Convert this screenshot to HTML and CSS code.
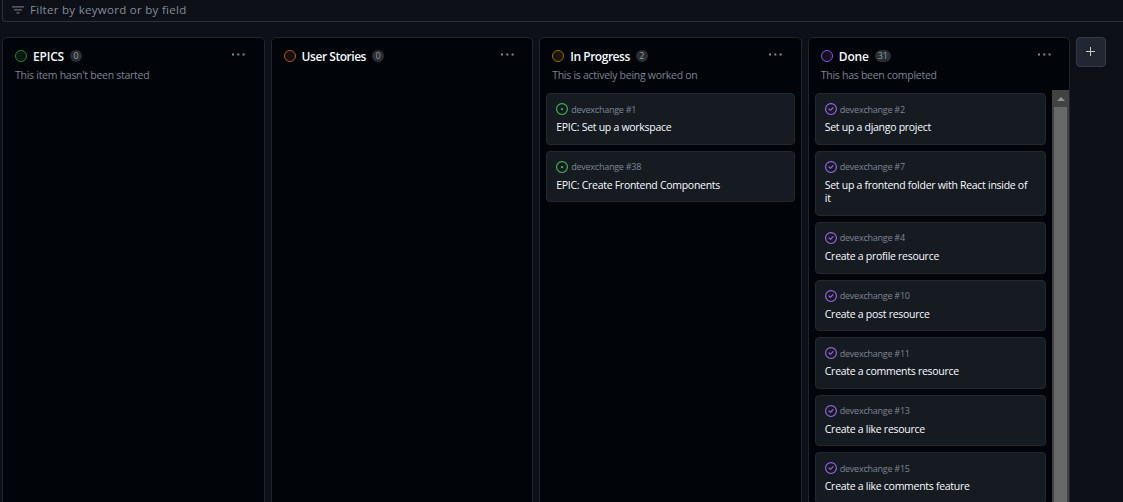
FILE: index.html
```
<!DOCTYPE html>
<html lang="en">
<head>
<meta charset="utf-8">
<title>devexchange board</title>
<link rel="stylesheet" href="styles.css">
</head>
<body>
<svg class="defs" aria-hidden="true">
  <symbol id="open" viewBox="0 0 16 16"><path d="M8 9.5a1.5 1.5 0 1 0 0-3 1.5 1.5 0 0 0 0 3Z"/><path d="M8 0a8 8 0 1 1 0 16A8 8 0 0 1 8 0ZM1.5 8a6.5 6.5 0 1 0 13 0 6.5 6.5 0 0 0-13 0Z"/></symbol>
  <symbol id="closed" viewBox="0 0 16 16"><path d="M11.28 6.78a.75.75 0 0 0-1.06-1.06L7.25 8.69 5.78 7.22a.75.75 0 0 0-1.06 1.06l2 2a.75.75 0 0 0 1.06 0l3.5-3.5Z"/><path d="M16 8A8 8 0 1 1 0 8a8 8 0 0 1 16 0Zm-1.5 0a6.5 6.5 0 1 0-13 0 6.5 6.5 0 0 0 13 0Z"/></symbol>
  <symbol id="dots" viewBox="0 0 13 3"><path d="M0 .5h2v2H0zM5.3.5h2v2h-2zM10.6.5h2v2h-2z"/></symbol>
</svg>
<div class="filter">
  <svg class="filter-icon" viewBox="0 0 12 8"><path d="M0 .3h12v1.3H0zM2 3.3h8v1.3H2zM4.5 6.3h3v1.3h-3z"/></svg>
  <span class="filter-text">Filter by keyword or by field</span>
</div>
<main class="board">
  <section class="column">
    <header class="head"><i class="dot green"></i><h2>EPICS</h2><span class="count">0</span><svg class="more"><use href="#dots"/></svg></header>
    <p class="desc">This item hasn't been started</p>
  </section>
  <section class="column">
    <header class="head"><i class="dot orange"></i><h2 class="tight">User Stories</h2><span class="count">0</span><svg class="more"><use href="#dots"/></svg></header>
  </section>
  <section class="column">
    <header class="head"><i class="dot yellow"></i><h2 class="tight">In Progress</h2><span class="count">2</span><svg class="more"><use href="#dots"/></svg></header>
    <p class="desc">This is actively being worked on</p>
    <div class="cards">
      <article class="card"><div class="repo"><svg class="open"><use href="#open"/></svg>devexchange #1</div><h3>EPIC: Set up a workspace</h3></article>
      <article class="card"><div class="repo"><svg class="open"><use href="#open"/></svg>devexchange #38</div><h3>EPIC: Create Frontend Components</h3></article>
    </div>
  </section>
  <section class="column done">
    <header class="head"><i class="dot purple"></i><h2>Done</h2><span class="count">31</span><svg class="more"><use href="#dots"/></svg></header>
    <p class="desc">This has been completed</p>
    <div class="scroller">
      <div class="cards">
        <article class="card"><div class="repo"><svg class="closed"><use href="#closed"/></svg>devexchange #2</div><h3>Set up a django project</h3></article>
        <article class="card tall"><div class="repo"><svg class="closed"><use href="#closed"/></svg>devexchange #7</div><h3>Set up a frontend folder with React inside of<br>it</h3></article>
        <article class="card"><div class="repo"><svg class="closed"><use href="#closed"/></svg>devexchange #4</div><h3>Create a profile resource</h3></article>
        <article class="card"><div class="repo"><svg class="closed"><use href="#closed"/></svg>devexchange #10</div><h3>Create a post resource</h3></article>
        <article class="card"><div class="repo"><svg class="closed"><use href="#closed"/></svg>devexchange #11</div><h3>Create a comments resource</h3></article>
        <article class="card"><div class="repo"><svg class="closed"><use href="#closed"/></svg>devexchange #13</div><h3>Create a like resource</h3></article>
        <article class="card"><div class="repo"><svg class="closed"><use href="#closed"/></svg>devexchange #15</div><h3>Create a like comments feature</h3></article>
      </div>
      <div class="bar"><svg class="arrow" viewBox="0 0 8 4"><path d="M0 4 4 0l4 4z"/></svg><div class="thumb"></div></div>
    </div>
  </section>
  <button class="add" aria-label="Add column"><svg viewBox="0 0 9 9"><path d="M4 0h1v4h4v1H5v4H4V5H0V4h4z"/></svg></button>
</main>
</body>
</html>
```
FILE: styles.css
```
* { box-sizing: border-box; }
body {
  margin: 0;
  height: 502px;
  overflow: hidden;
  background: #0d1017;
  color: #f6faff;
  font-family: "Open Sans", "Noto Sans", sans-serif;
  display: flex;
  flex-direction: column;
}
.defs { display: none; }
h2, h3, p { margin: 0; }
svg { fill: currentColor; flex: none; }
.filter {
  flex: none;
  height: 22px;
  margin-left: 2px;
  border: 1px solid #2d3138;
  border-width: 0 0 1px 1px;
  border-radius: 0 0 0 4px;
  display: flex;
  align-items: center;
  padding: 0 0 2px 9px;
  gap: 6px;
  color: #848d97;
  font-size: 11.5px;
  line-height: 16px;
}
.filter-icon { width: 12px; height: 8px; color: #656c76; }
.filter-text { letter-spacing: .29px; }
.board {
  flex: none;
  display: flex;
  gap: 6px;
  padding: 15px 0 0 2px;
}
.column {
  flex: none;
  width: 262.6px;
  height: 480px;
  background: #010409;
  border: 1px solid #22262c;
  border-radius: 5px;
}
.head {
  display: flex;
  align-items: center;
  height: 18px;
  margin-top: 9px;
  padding: 0 18.6px 0 12px;
}
.dot { width: 12px; height: 12px; border: 1px solid; border-radius: 50%; }
.green { border-color: #238636; background: #08170f; }
.orange { border-color: #bd561d; background: #15100d; }
.yellow { border-color: #9e6a03; background: #1a140a; }
.purple { border-color: #8957e5; background: #130f20; }
h2 {
  margin-left: 6px;
  padding-top: 2px;
  font-size: 12px;
  font-weight: 650;
  line-height: 18px;
  letter-spacing: -.2px;
}
.tight { letter-spacing: -.46px; }
.count {
  margin-left: 6px;
  min-width: 12px;
  height: 12px;
  padding: 0 3px;
  border-radius: 6px;
  background: #292e35;
  color: #9198a1;
  font-size: 9px;
  line-height: 12px;
  text-align: center;
}
.more { width: 13px; height: 3px; margin: -3px 0 0 auto; color: #848d97; }
.desc {
  padding-left: 12px;
  height: 17px;
  margin-top: 2px;
  font-size: 10.5px;
  line-height: 17px;
  letter-spacing: -.27px;
  color: #7d8590;
}
.cards {
  display: flex;
  flex-direction: column;
  gap: 6px;
  padding: 9px 6px 0;
}
.scroller { display: flex; margin-top: 6px; }
.done .cards { flex: 1; padding-top: 3.4px; }
.card {
  height: 51.6px;
  flex: none;
  border: 1px solid #23272e;
  border-radius: 4px;
  background: #161b22;
  padding: 9px 0 0 9px;
}
.tall { height: 65px; }
.repo {
  display: flex;
  align-items: center;
  gap: 3px;
  height: 12px;
  font-size: 9px;
  letter-spacing: -.24px;
  color: #7d8590;
}
.repo svg { width: 12px; height: 12px; }
.repo .open { color: #3fb950; }
.repo .closed { color: #9566e4; }
h3 {
  margin-top: 6px;
  font-size: 10.5px;
  line-height: 13px;
  font-weight: 400;
  letter-spacing: -.28px;
  white-space: nowrap;
}
.bar {
  width: 17px;
  height: 420px;
  background: #424242;
  display: flex;
  flex-direction: column;
  align-items: center;
}
.arrow { width: 8px; height: 4px; margin: 7px 0 6px; color: #909090; }
.thumb { width: 13px; flex: 1; background: #686868; }
.add {
  width: 30px;
  height: 30px;
  border: 1px solid #363b42;
  border-radius: 4px;
  background: #212630;
  color: #c4cad0;
  padding: 0 1px 1px 0;
  display: grid;
  place-items: center;
}
.add svg { width: 9px; height: 9px; }
```
